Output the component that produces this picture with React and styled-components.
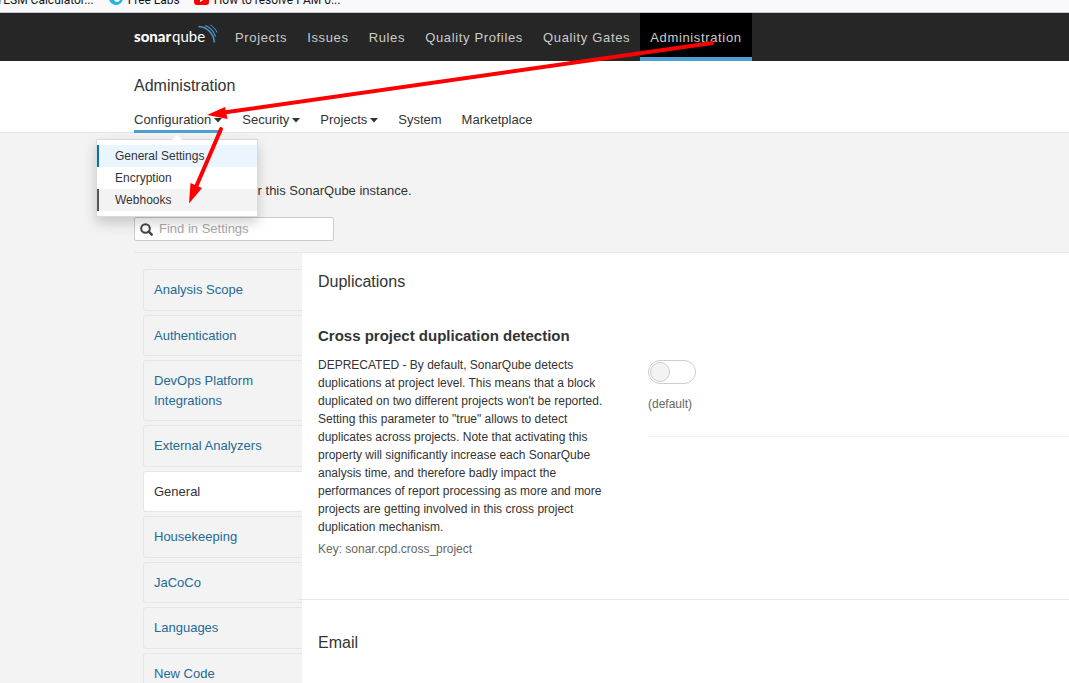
import React from "react";
import styled, { createGlobalStyle, css } from "styled-components";

const GlobalStyle = createGlobalStyle`
  *, *::before, *::after { box-sizing: border-box; }
  body {
    margin: 0;
    background: #f3f3f3;
    color: #333;
    font-family: "Liberation Sans", Arial, sans-serif;
    font-size: 13px;
    line-height: 1.5;
    overflow: hidden;
  }
  h1, h2, h3, p, ul { margin: 0; padding: 0; }
  ul { list-style: none; }
  a { color: inherit; text-decoration: none; }
`;

const Page = styled.div`
  position: relative;
  height: 100vh;
  overflow: hidden;
`;

const BookmarkBar = styled.div`
  display: flex;
  align-items: flex-end;
  gap: 14px;
  height: 13px;
  margin-left: -4px;
  padding-bottom: 4px;
  overflow: hidden;
  background: #f9f9fb;
  border-bottom: 1px solid #c4c4c6;
  color: #15141a;
  font: 12px/16px Roboto, sans-serif;
`;

const Bookmark = styled.a`
  display: flex;
  align-items: center;
  gap: 4px;
  white-space: nowrap;
`;

const TopBar = styled.header`
  display: flex;
  height: 48px;
  padding-left: 134px;
  background: #262626;
`;

const Logo = styled.a`
  display: flex;
  align-items: center;
  width: 91px;
`;

const MainNav = styled.nav`
  display: flex;
`;

const MainNavLink = styled.a`
  padding: 1px 10px 0;
  line-height: 48px;
  letter-spacing: 0.05em;
  color: #ccc;
  white-space: nowrap;
  ${(p) =>
    p.$active &&
    css`
      background: #000;
      border-bottom: 4px solid #4b9fd5;
    `}
`;

const ContextBar = styled.div`
  height: 72px;
  padding: 14px 0 0 134px;
  background: #fff;
  border-bottom: 1px solid #e6e6e6;
`;

const PageTitle = styled.h1`
  font-size: 16px;
  font-weight: 400;
  line-height: 22px;
`;

const Tabs = styled.nav`
  display: flex;
  gap: 20px;
  margin-top: 8px;
`;

const TabItem = styled.div`
  position: relative;
`;

const tabStyle = css`
  display: flex;
  align-items: center;
  gap: 3px;
  height: 28px;
  padding: 5px 0 0;
  border: 0;
  border-bottom: 3px solid ${(p) => (p.$active ? "#4b9fd5" : "transparent")};
  background: none;
  color: #333;
  font: inherit;
`;
const TabButton = styled.button`${tabStyle}`;
const TabLink = styled.a`${tabStyle}`;

const Menu = styled.ul`
  position: absolute;
  z-index: 2;
  top: 34px;
  left: -38px;
  width: 162px;
  padding: 5px 0;
  background: #fff;
  border: 1px solid #dadada;
  box-shadow: 0 6px 12px rgba(0, 0, 0, 0.18);
  font-size: 12px;
  &::before {
    content: "";
    position: absolute;
    top: -5px;
    left: 75px;
    border: 5px solid transparent;
    border-top: 0;
    border-bottom-color: #fff;
  }
`;

const MenuLink = styled.a`
  display: block;
  padding-left: 16px;
  line-height: 22px;
  border-left: 2px solid ${(p) => p.$mark || "transparent"};
  background: ${(p) => p.$fill || "#fff"};
`;

const Content = styled.main`
  padding: 48px 0 0 134px;
`;

const Intro = styled.p`
  line-height: 20px;
`;

const SearchBox = styled.label`
  display: flex;
  align-items: center;
  gap: 6px;
  width: 200px;
  height: 24px;
  margin-top: 16px;
  padding: 0 5px;
  background: #fff;
  border: 1px solid #ccc;
  border-radius: 2px;
`;

const SearchInput = styled.input`
  flex: 1;
  min-width: 0;
  padding: 0;
  border: 0;
  outline: 0;
  background: none;
  font: inherit;
  &::placeholder { color: #aaa; }
`;

const Settings = styled.div`
  display: grid;
  grid-template-columns: 168px 1fr;
  margin-top: 11px;
  border-top: 1px solid #e6e6e6;
`;

const Categories = styled.ul`
  display: flex;
  flex-direction: column;
  gap: 4px;
  padding: 16px 0 0 9px;
`;

const CategoryLink = styled.a`
  display: block;
  padding: 10px 24px 10px 10px;
  border: 1px solid #e6e6e6;
  border-right: 0;
  border-radius: 3px 0 0 3px;
  background: ${(p) => (p.$active ? "#fff" : "transparent")};
  color: ${(p) => (p.$active ? "#333" : "#236a97")};
`;

const Panel = styled.div`
  background: #fff;
  min-height: 440px;
`;

const Section = styled.section`
  padding: 17px 0 41px 16px;
  & + & {
    margin-left: -4px;
    padding: 31px 0 41px 20px;
    border-top: 1px solid #e6e6e6;
  }
`;

const SectionTitle = styled.h2`
  font-size: 16px;
  font-weight: 400;
  line-height: 24px;
`;

const Definition = styled.div`
  display: grid;
  grid-template-columns: 300px 1fr;
  column-gap: 30px;
  padding-top: 32px;
`;

const DefinitionName = styled.h3`
  font-size: 15px;
  font-weight: 700;
  line-height: 20px;
`;

const Description = styled.p`
  margin-top: 10px;
  font-size: 12px;
  line-height: 18px;
`;

const SettingKey = styled.p`
  margin-top: 4px;
  font-size: 12px;
  line-height: 18px;
  color: #666;
`;

const Value = styled.div`
  align-self: start;
  margin-top: 34px;
  padding-bottom: 23px;
  border-bottom: 1px dotted #e6e6e6;
  font-size: 12px;
  line-height: 18px;
  color: #666;
`;

const Toggle = styled.input`
  appearance: none;
  display: block;
  width: 48px;
  height: 24px;
  margin: 0 0 11px;
  padding: 1px;
  border: 1px solid #cdcdcd;
  border-radius: 12px;
  background: #fff;
  &::before {
    content: "";
    display: block;
    width: 20px;
    height: 20px;
    border: 1px solid #cdcdcd;
    border-radius: 50%;
    background: #f3f3f3;
  }
`;

const Annotations = styled.svg`
  position: absolute;
  z-index: 3;
  top: 0;
  left: 0;
  pointer-events: none;
`;

const Caret = () => (
  <svg width="8" height="5" viewBox="0 0 8 5" aria-hidden="true">
    <path d="M0 0h8L4 4.5z" fill="#333" />
  </svg>
);

const LogoMark = () => (
  <svg width="86" height="28" viewBox="0 0 86 28" role="img" aria-label="SonarQube">
    <g fill="#fff" fontFamily="Lato, sans-serif" fontSize="15">
      <text x="0" y="19" fontWeight="900">sonar</text>
      <text x="38" y="19" fontWeight="400">qube</text>
    </g>
    <g fill="none" stroke="#4b9fd5">
      <path d="M64.500 3.500C73 3.800 80 10.500 80.300 19.500" strokeWidth="1.500" />
      <path d="M71 2.500C76 4.200 80 8.500 81.500 13.500" strokeWidth="1.200" />
      <path d="M76.500 2C79.500 3.800 81.600 6.300 83 9.500" strokeWidth="1" />
    </g>
  </svg>
);

const SearchIcon = () => (
  <svg width="13" height="13" viewBox="0 0 13 13" fill="none" stroke="#444" strokeWidth="2" aria-hidden="true">
    <circle cx="5.500" cy="5.500" r="4.300" />
    <path d="M8.700 8.700l3 3" strokeWidth="2.400" strokeLinecap="round" />
  </svg>
);

const navItems = ["Projects", "Issues", "Rules", "Quality Profiles", "Quality Gates", "Administration"];
const categories = [
  "Analysis Scope",
  "Authentication",
  "DevOps Platform Integrations",
  "External Analyzers",
  "General",
  "Housekeeping",
  "JaCoCo",
  "Languages",
  "New Code",
];

export default function App() {
  return (
    <Page>
      <GlobalStyle />
      <BookmarkBar>
        <Bookmark href="#">YESM Calculator...</Bookmark>
        <Bookmark href="#">
          <svg width="16" height="16" viewBox="0 0 16 16" aria-hidden="true">
            <circle cx="8" cy="6" r="7" fill="#20b4e8" />
            <circle cx="9" cy="7" r="3" fill="#fff" />
          </svg>
          Free Labs
        </Bookmark>
        <Bookmark href="#">
          <svg width="16" height="16" viewBox="0 0 16 16" aria-hidden="true">
            <rect x="0" y="1" width="15" height="12" rx="3" fill="#f00" />
            <path d="M6 4v6l5-3z" fill="#fff" />
          </svg>
          How to resolve PAM 0...
        </Bookmark>
      </BookmarkBar>

      <TopBar>
        <Logo href="#"><LogoMark /></Logo>
        <MainNav>
          {navItems.map((name) => (
            <MainNavLink key={name} href="#" $active={name === "Administration"}>{name}</MainNavLink>
          ))}
        </MainNav>
      </TopBar>

      <ContextBar>
        <PageTitle>Administration</PageTitle>
        <Tabs>
          <TabItem>
            <TabButton $active>Configuration <Caret /></TabButton>
            <Menu>
              <li><MenuLink href="#" $mark="#0271b9" $fill="#ebf5fe">General Settings</MenuLink></li>
              <li><MenuLink href="#">Encryption</MenuLink></li>
              <li><MenuLink href="#" $mark="#555" $fill="#f3f3f3">Webhooks</MenuLink></li>
            </Menu>
          </TabItem>
          <TabButton>Security <Caret /></TabButton>
          <TabButton>Projects <Caret /></TabButton>
          <TabLink href="#">System</TabLink>
          <TabLink href="#">Marketplace</TabLink>
        </Tabs>
      </ContextBar>

      <Content>
        <Intro>Edit global settings for this SonarQube instance.</Intro>
        <SearchBox>
          <SearchIcon />
          <SearchInput type="text" placeholder="Find in Settings" aria-label="Find in Settings" />
        </SearchBox>

        <Settings>
          <Categories>
            {categories.map((name) => (
              <li key={name}>
                <CategoryLink href="#" $active={name === "General"}>{name}</CategoryLink>
              </li>
            ))}
          </Categories>
          <Panel>
            <Section>
              <SectionTitle>Duplications</SectionTitle>
              <Definition>
                <div>
                  <DefinitionName id="cross-project">Cross project duplication detection</DefinitionName>
                  <Description>
                    DEPRECATED - By default, SonarQube detects duplications at project level. This means
                    that a block duplicated on two different projects won't be reported. Setting this
                    parameter to "true" allows to detect duplicates across projects. Note that activating
                    this property will significantly increase each SonarQube analysis time, and therefore
                    badly impact the performances of report processing as more and more projects are
                    getting involved in this cross project duplication mechanism.
                  </Description>
                  <SettingKey>Key: sonar.cpd.cross_project</SettingKey>
                </div>
                <Value>
                  <Toggle type="checkbox" role="switch" aria-labelledby="cross-project" />
                  (default)
                </Value>
              </Definition>
            </Section>
            <Section>
              <SectionTitle>Email</SectionTitle>
            </Section>
          </Panel>
        </Settings>
      </Content>

      <Annotations width="760" height="220" viewBox="0 0 760 220" aria-hidden="true">
        <g stroke="#f00" strokeWidth="4" strokeLinecap="round" fill="#f00">
          <path d="M712 43L224 112.500" />
          <path d="M221 129L196 187" />
          <path d="M207 115L225 107L227.500 119z" stroke="none" />
          <path d="M189 203.500L190.500 183L202 188z" stroke="none" />
        </g>
      </Annotations>
    </Page>
  );
}
